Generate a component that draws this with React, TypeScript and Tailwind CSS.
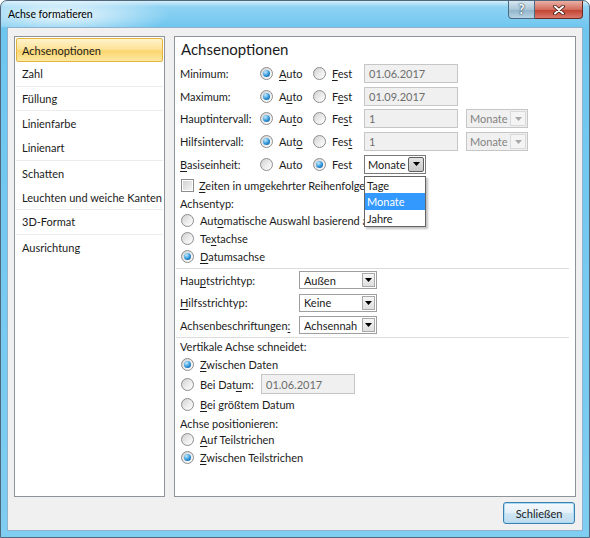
import React from "react";

const M = ({ t, i }: { t: string; i?: number }) => {
  if (i === undefined) return <span className="whitespace-nowrap">{t}</span>;
  return (
    <span className="whitespace-nowrap">
      {t.slice(0, i)}
      <span className="underline underline-offset-[2px]">{t[i]}</span>
      {t.slice(i + 1)}
    </span>
  );
};

const Radio = ({ checked }: { checked?: boolean }) => (
  <span className="inline-flex h-[13px] w-[13px] shrink-0 items-center justify-center rounded-full border border-[#8d8d8d] bg-[linear-gradient(135deg,#cfcfcf,#ededed_55%,#ffffff)]">
    {checked && (
      <span className="h-[7px] w-[7px] rounded-full bg-[radial-gradient(circle_at_35%_30%,#c4ecff,#2c93d8_55%,#0b4a85)]" />
    )}
  </span>
);

const Checkbox = () => (
  <span className="inline-flex h-[13px] w-[13px] shrink-0 items-center justify-center border border-[#8d8d8d] bg-white">
    <span className="h-[9px] w-[9px] bg-[linear-gradient(135deg,#d2d2d2,#f4f4f4)]" />
  </span>
);

const Arrow = ({ color = "#000" }: { color?: string }) => (
  <svg width="7" height="4" viewBox="0 0 7 4">
    <path d="M0 0h7L3.5 4z" fill={color} />
  </svg>
);

const TextBox = ({ value, className }: { value: string; className: string }) => (
  <div
    className={`flex h-[19px] items-center border border-[#c6c6c6] bg-[#f0f0f0] pl-[4px] text-[#6d6d6d] ${className}`}
  >
    {value}
  </div>
);

const DisabledCombo = () => (
  <div className="flex h-[19px] w-[62px] items-center border border-[#c6c6c6] bg-[#f0f0f0] pl-[3px] text-[#838383]">
    <span className="flex-1">Monate</span>
    <span className="mr-[1px] flex h-[15px] w-[16px] items-center justify-center border border-[#d9d9d9] bg-[#f4f4f4]">
      <Arrow color="#a8a8a8" />
    </span>
  </div>
);

const Combo = ({ value }: { value: string }) => (
  <div className="flex h-[18px] w-[78px] items-center border border-[#9f9f9f] bg-white pl-[4px]">
    <span className="flex-1 overflow-hidden whitespace-nowrap">{value}</span>
    <span className="mr-[1px] flex h-[14px] w-[13px] shrink-0 items-center justify-center border border-[#a9a9a9] bg-[linear-gradient(to_bottom,#f6f6f6,#dedede)]">
      <Arrow />
    </span>
  </div>
);

const AutoFestRow = ({
  label,
  autoU,
  festU,
  value,
  combo,
}: {
  label: string;
  autoU?: number;
  festU?: number;
  value?: string;
  combo?: React.ReactNode;
}) => (
  <div className="flex h-[22.75px] items-center">
    <span className="w-[80px] whitespace-nowrap">{label}</span>
    <span className="flex w-[53px] items-center gap-[6px]">
      <Radio checked />
      <M t="Auto" i={autoU} />
    </span>
    <span className="flex w-[51px] items-center gap-[6px]">
      <Radio />
      <M t="Fest" i={festU} />
    </span>
    {value !== undefined && <TextBox value={value} className="w-[94px]" />}
    {combo}
  </div>
);

const OptRow = ({
  checked,
  children,
  h,
}: {
  checked?: boolean;
  children: React.ReactNode;
  h: string;
}) => (
  <div className={`flex items-center gap-[6px] pl-[1px] ${h}`}>
    <Radio checked={checked} />
    {children}
  </div>
);

const navItems = [
  { label: "Achsenoptionen", sep: false },
  { label: "Zahl", sep: true },
  { label: "Füllung", sep: true },
  { label: "Linienfarbe", sep: false },
  { label: "Linienart", sep: true },
  { label: "Schatten", sep: false },
  { label: "Leuchten und weiche Kanten", sep: true },
  { label: "3D-Format", sep: true },
  { label: "Ausrichtung", sep: false },
];

export default function App() {
  return (
    <div className="flex h-[538px] w-[590px] flex-col overflow-hidden rounded-t-[7px] border border-[#51687c] bg-[linear-gradient(to_bottom,#d4eefa,#8ed2f3_6px,#6ec6ef_28px,#7fcdf1)] font-['Lato','Noto_Sans',sans-serif] text-[11px] leading-none text-[#1b1b1b]">
      {/* title bar */}
      <div className="flex h-[26px] items-start justify-between bg-[radial-gradient(ellipse_110px_22px_at_60px_14px,rgba(255,255,255,0.85),rgba(255,255,255,0))]">
        <span className="pl-[7px] pt-[8px] text-[10.5px] text-black">Achse formatieren</span>
        <div className="mr-[6px] flex">
          <div className="flex h-[18px] w-[27px] items-center justify-center rounded-bl-[4px] border border-t-0 border-[#4a6a82] bg-[linear-gradient(to_bottom,#d7e7f1,#a9c6d8_50%,#8fb3c9_51%,#b8d3e3)] text-[13px] font-bold text-white [text-shadow:0_0_2px_#1f3b52,0_0_1px_#1f3b52]">
            ?
          </div>
          <div className="flex h-[18px] w-[48px] items-center justify-center rounded-br-[4px] border border-l-0 border-t-0 border-[#6b2a22] bg-[linear-gradient(to_bottom,#eab0a4,#d26d5e_50%,#c0412f_51%,#d9786a)]">
            <svg width="12" height="10" viewBox="0 0 12 10">
              <path d="M2 1.5l8 7M10 1.5l-8 7" stroke="#3b1610" strokeWidth="3.6" strokeLinecap="round" />
              <path d="M2 1.5l8 7M10 1.5l-8 7" stroke="#fff" strokeWidth="2" strokeLinecap="round" />
            </svg>
          </div>
        </div>
      </div>

      {/* client */}
      <div className="mx-[6px] flex h-[504px] flex-col border border-[#8fb3cf] bg-[#f0f0f0] px-[6px] pt-[8px]">
        <div className="flex gap-[9px]">
          {/* nav */}
          <div className="h-[461px] w-[151px] border border-[#8e9399] bg-white px-[1px] pt-[1px]">
            {navItems.map((it, idx) =>
              idx === 0 ? (
                <div
                  key={it.label}
                  className="flex h-[24px] items-center rounded-[2px] border border-[#e3b53e] bg-[linear-gradient(to_bottom,#fff3cc,#fde39a_45%,#fcd66f_55%,#fde8a4)] pl-[5px]"
                >
                  {it.label}
                </div>
              ) : (
                <div
                  key={it.label}
                  className={`flex h-[24.7px] items-center whitespace-nowrap pl-[6px] ${it.sep ? "border-b border-[#ececec]" : ""}`}
                >
                  {it.label}
                </div>
              )
            )}
          </div>

          {/* options */}
          <div className="h-[461px] w-[402px] border border-[#8e9399] bg-white pl-[5px]">
            <div className="flex h-[25px] items-center pl-[1px] text-[15px]">Achsenoptionen</div>
            <AutoFestRow label="Minimum:" autoU={0} festU={0} value="01.06.2017" />
            <AutoFestRow label="Maximum:" autoU={1} festU={1} value="01.09.2017" />
            <AutoFestRow
              label="Hauptintervall:"
              autoU={2}
              festU={2}
              value="1"
              combo={
                <span className="ml-[8px]">
                  <DisabledCombo />
                </span>
              }
            />
            <AutoFestRow
              label="Hilfsintervall:"
              autoU={3}
              festU={3}
              value="1"
              combo={
                <span className="ml-[8px]">
                  <DisabledCombo />
                </span>
              }
            />
            <div className="flex h-[22.75px] items-center">
              <span className="w-[80px]">
                <M t="Basiseinheit:" i={0} />
              </span>
              <span className="flex w-[53px] items-center gap-[6px]">
                <Radio />
                Auto
              </span>
              <span className="flex w-[51px] items-center gap-[6px]">
                <Radio checked />
                Fest
              </span>
              <div className="relative">
                <div className="flex h-[19px] w-[62px] items-center border border-[#7a7a7a] bg-white pl-[3px]">
                  <span className="flex-1">Monate</span>
                  <span className="mr-[1px] flex h-[15px] w-[16px] items-center justify-center rounded-[2px] border border-[#5e5e5e] bg-[linear-gradient(to_bottom,#e4e4e4,#c9c9c9)]">
                    <Arrow />
                  </span>
                </div>
                <div className="absolute left-0 top-[21px] z-10 w-[62px] border border-[#646464] bg-white shadow-[2px_2px_2px_rgba(0,0,0,0.25)]">
                  <div className="flex h-[16.5px] items-center pl-[2px]">Tage</div>
                  <div className="flex h-[16.5px] items-center bg-[#3399ff] pl-[2px] text-white">Monate</div>
                  <div className="flex h-[16.5px] items-center pl-[2px]">Jahre</div>
                </div>
              </div>
            </div>

            <div className="flex h-[20px] items-center gap-[5px] pl-[1px]">
              <Checkbox />
              <M t="Zeiten in umgekehrter Reihenfolge" i={0} />
            </div>
            <div className="flex h-[15.5px] items-center">Achsentyp:</div>
            <OptRow h="h-[18.3px]">
              <M t="Automatische Auswahl basierend auf Daten" i={3} />
            </OptRow>
            <OptRow h="h-[18.3px]">
              <M t="Textachse" i={2} />
            </OptRow>
            <OptRow checked h="h-[18.3px]">
              <M t="Datumsachse" i={0} />
            </OptRow>

            <div className="ml-[-4px] mr-[6px] mt-[2px] h-px bg-[#dcdcdc]" />

            <div className="flex h-[22.5px] items-center">
              <span className="w-[119px]">
                <M t="Hauptstrichtyp:" i={3} />
              </span>
              <Combo value="Außen" />
            </div>
            <div className="flex h-[22.5px] items-center">
              <span className="w-[119px]">
                <M t="Hilfsstrichtyp:" i={0} />
              </span>
              <Combo value="Keine" />
            </div>
            <div className="flex h-[22.5px] items-center">
              <span className="w-[119px]">
                <M t="Achsenbeschriftungen:" i={20} />
              </span>
              <Combo value="Achsennah" />
            </div>

            <div className="ml-[-4px] mr-[6px] h-px bg-[#dcdcdc]" />

            <div className="flex h-[18px] items-center">Vertikale Achse schneidet:</div>
            <OptRow checked h="h-[18px]">
              <M t="Zwischen Daten" i={0} />
            </OptRow>
            <div className="flex h-[21px] items-center pl-[1px]">
              <span className="flex w-[80px] items-center gap-[6px]">
                <Radio />
                <M t="Bei Datum:" i={7} />
              </span>
              <TextBox value="01.06.2017" className="h-[20px] w-[94px]" />
            </div>
            <OptRow h="h-[20px]">
              <M t="Bei größtem Datum" i={0} />
            </OptRow>
            <div className="flex h-[17px] items-center">Achse positionieren:</div>
            <OptRow h="h-[16px]">
              <M t="Auf Teilstrichen" i={0} />
            </OptRow>
            <OptRow checked h="h-[19px]">
              <M t="Zwischen Teilstrichen" i={0} />
            </OptRow>
          </div>
        </div>

        <div className="mt-[5px] flex justify-end pr-[1px]">
          <div className="flex h-[22px] w-[72px] items-center justify-center rounded-[3px] border border-[#3c7fb1] bg-[linear-gradient(to_bottom,#f4f9fc,#e3f0f8_50%,#cfe6f4_51%,#bfdcef)] shadow-[inset_0_0_0_1px_#a8dcf5]">
            Schließen
          </div>
        </div>
      </div>
    </div>
  );
}
